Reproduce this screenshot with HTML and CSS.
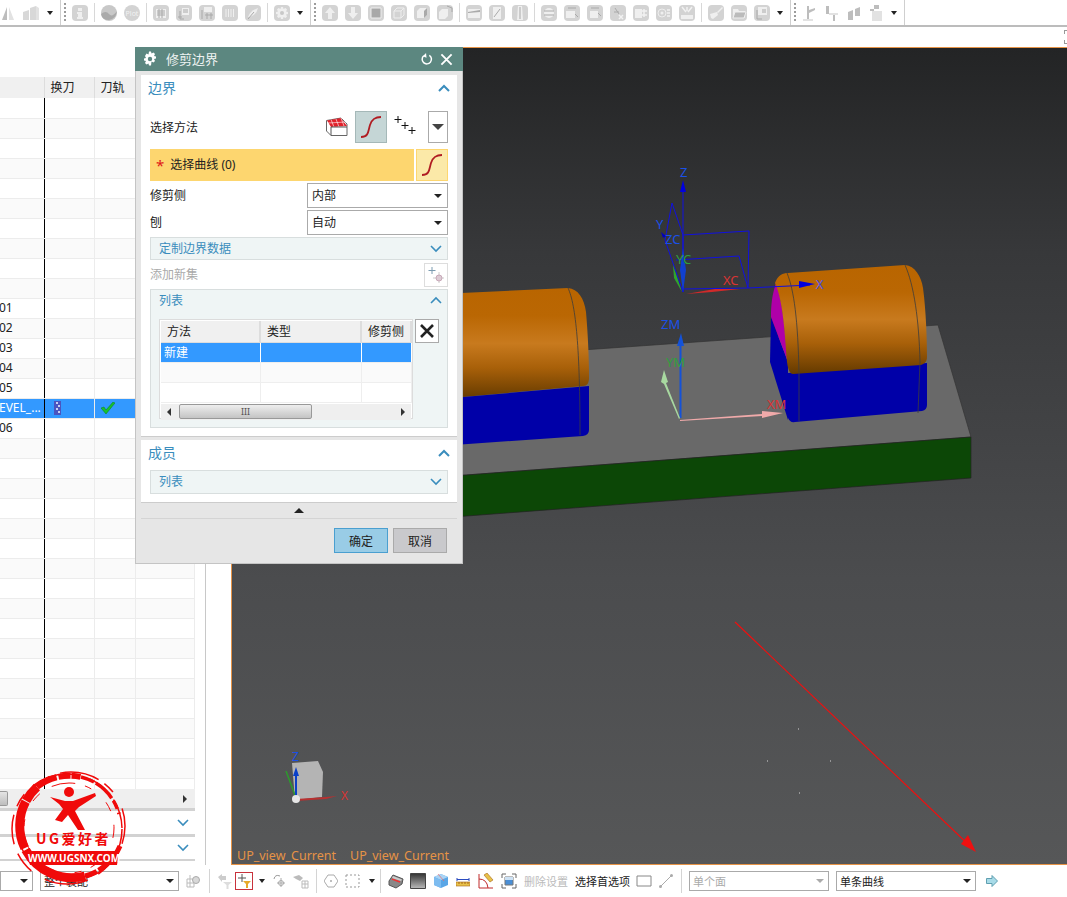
FILE: index.html
```html
<!DOCTYPE html>
<html lang="zh">
<head>
  <meta charset="UTF-8">
  <title>修剪边界</title>
  <link rel="stylesheet" href="styles.css">
</head>
<body>
  <header class="toolbar">
    <svg class="tool thin" viewBox="0 0 12 16"><path class="g2" d="M5 2V15H0Z"/><path class="g3" d="M7 2V15H12Z"/></svg>
    <svg class="tool big" viewBox="0 0 18 16"><path class="g1" d="M1 7 7 5V15H1ZM8 3 14 1V15H8Z"/><path class="g3" d="M14 1 17 3V15H14Z"/></svg>
    <span class="drop"></span>
    <span class="sep full"></span><span class="grip"></span>
    <svg class="tool tile" viewBox="0 0 16 16"><path class="w" d="M6 3h4v3H6ZM5 7h5v5h1v2H5v-2h1V9H5Z"/></svg>
    <span class="sep"></span>
    <svg class="tool" viewBox="0 0 16 16"><circle cx="8" cy="8" r="8" fill="#c8c8c8"/><path d="M0 9Q5 5 8 9T16 6Q15 14 8 15 1 15 0 9Z" fill="#aaa"/></svg>
    <svg class="tool round" viewBox="0 0 16 16"><text class="plot" x="8" y="11" text-anchor="middle">Plot</text></svg>
    <span class="sep"></span>
    <svg class="tool tile" viewBox="0 0 16 16"><path class="w" d="M3 4h10v9H3Z"/><path class="d" d="M4 6h8M4 8h8M4 10h8M6 4v9M9 4v9"/></svg>
    <svg class="tool tile" viewBox="0 0 16 16"><path class="w" d="M6 3h7v7H6Z"/><path class="d" d="M7 5h5M7 7h5M4 6v8h4M2 12h4"/></svg>
    <svg class="tool tile" viewBox="0 0 16 16"><path class="w" d="M5 2h8v5H5Z"/><path class="d" d="M3 5v9M7 9h2v2H7ZM11 9h2v2h-2ZM7 13h2M11 13h2"/></svg>
    <svg class="tool tile" viewBox="0 0 16 16"><path class="d w2" d="M4 4v8M6.500 4v8M9 4v8M11.500 4v8"/></svg>
    <svg class="tool tile" viewBox="0 0 16 16"><path class="w" d="M3 12Q5 6 13 3 12 9 5 12Z"/><path class="d" d="M3 14 9 7"/></svg>
    <span class="sep"></span>
    <svg class="tool tile" viewBox="0 0 16 16"><path class="w" d="M7 2h2l.500 2 2-1 1.500 1.500-1 2 2 .500v2l-2 .500 1 2-1.500 1.500-2-1L9 14H7l-.500-2-2 1L3 11.500l1-2-2-.500V7l2-.500-1-2L4.500 3l2 1Z"/><circle cx="8" cy="8" r="2" fill="#c8c8c8"/></svg>
    <span class="drop"></span>
    <span class="sep full"></span><span class="grip"></span>
    <svg class="tool tile" viewBox="0 0 16 16"><path class="w" d="M8 2 13 8H10V14H6V8H3Z"/></svg>
    <svg class="tool tile" viewBox="0 0 16 16"><path class="w" d="M8 14 3 8H6V2h4V8h3Z"/></svg>
    <svg class="tool tile" viewBox="0 0 16 16"><path d="M3 3h10v10H3Z" fill="#a8a8a8" stroke="#eee"/></svg>
    <svg class="tool tile" viewBox="0 0 16 16"><path class="outline" d="M3 6 6 3H13V10L10 13H3ZM3 6H10V13M10 6 13 3"/></svg>
    <svg class="tool tile" viewBox="0 0 16 16"><path class="w" d="M3 6 6 3H13V10L10 13H3Z"/><path d="M10 6 13 3V10L10 13Z" fill="#aaa"/></svg>
    <svg class="tool tile" viewBox="0 0 16 16"><path class="w" d="M2 7 5 4H11V11L8 14H2Z"/><path class="d" d="M10 1 15 3V7"/></svg>
    <span class="sep"></span>
    <svg class="tool tile" viewBox="0 0 16 16"><path class="w" d="M2 4H14V13H2Z"/><path d="M2 7 14 5V7L2 8Z" fill="#aaa"/></svg>
    <svg class="tool tile" viewBox="0 0 16 16"><path class="w" d="M4 2h8v12H4Z"/><path class="d" d="M5 12 11 4"/></svg>
    <svg class="tool tile" viewBox="0 0 16 16"><path class="w" d="M6 1h4l1 14H5Z"/><path class="d" d="M8 2v12"/></svg>
    <span class="sep"></span>
    <svg class="tool tile" viewBox="0 0 16 16"><circle class="w" cx="8" cy="8" r="5"/><path class="d" d="M3 6h10M3 10h10"/></svg>
    <svg class="tool tile" viewBox="0 0 16 16"><path class="w" d="M2 6h9v7H2Z"/><path class="d" d="M4 3h8M11 9l3 3"/></svg>
    <svg class="tool tile" viewBox="0 0 16 16"><path class="w" d="M3 6h8v7H3Z"/><path class="d" d="M4 3h8M11 8l3 3"/></svg>
    <svg class="tool tile" viewBox="0 0 16 16"><path class="d" d="M5 3l4 6M4 7h5"/><path class="x" d="M9 10l4 4M13 10l-4 4"/></svg>
    <svg class="tool tile" viewBox="0 0 16 16"><path class="w" d="M2 4h7v9H2Z"/><path class="x" d="M11 4v8M9 6h5M9 10h5"/></svg>
    <svg class="tool tile" viewBox="0 0 16 16"><circle class="outline" cx="6" cy="8" r="4"/><circle class="w" cx="6" cy="8" r="1.500"/><path class="x" d="M11 5h3M11 8h3M11 11h3"/></svg>
    <svg class="tool tile" viewBox="0 0 16 16"><path class="x" d="M3 2l4 5M13 2 9 7M8 2v4"/><path class="w" d="M2 10h12v4H2Z"/></svg>
    <span class="sep"></span>
    <svg class="tool tile" viewBox="0 0 16 16"><path class="w" d="M9 7 14 2 15 3 10 8ZM2 9 9 7 10 10 5 14 3 13Z"/></svg>
    <svg class="tool tile" viewBox="0 0 16 16"><path class="w" d="M2 4h5l1 2h6v7H2Z"/><path d="M2 13 4 7H15L13 13Z" fill="#bbb" stroke="#eee"/></svg>
    <svg class="tool tile" viewBox="0 0 16 16"><path class="w" d="M4 2h9v8H4Z"/><path class="d" d="M3 5v9h5M8 5h4M8 7h4"/></svg>
    <span class="drop"></span>
    <span class="sep full"></span><span class="grip"></span>
    <svg class="tool thin2" viewBox="0 0 14 16"><path class="g2" d="M5 1h2v13H5ZM7 5l6-2v2L7 8Z"/><path class="g3" d="M1 14H11V16H1Z"/></svg>
    <svg class="tool thin2 m1" viewBox="0 0 14 16"><path class="g2" d="M1 1h3v8H1ZM8 8h2v8H8Z"/><path class="g3" d="M4 8H13V10H4Z"/></svg>
    <svg class="tool thin2 m1" viewBox="0 0 14 16"><path class="g2" d="M1 7 6 5V15H1ZM8 4 13 2V11H8Z"/></svg>
    <svg class="tool big2" viewBox="0 0 15 16"><path class="g3" d="M3 6H13V16H3Z"/><path class="g2" d="M5 0h5v4H5ZM1 4h4v2H1Z"/></svg>
    <span class="drop"></span>
    <span class="sep full"></span>
  </header>

  <div class="strip"><span class="corner"></span></div>

  <div class="workspace">
    <aside class="nav">
      <div class="nav-wrap">
        <table class="nav-table">
          <thead><tr><th></th><th>换刀</th><th>刀轨</th><th></th></tr></thead>
          <tbody>
            <tr><td></td><td></td><td></td><td></td></tr>
            <tr><td></td><td></td><td></td><td></td></tr>
            <tr><td></td><td></td><td></td><td></td></tr>
            <tr><td></td><td></td><td></td><td></td></tr>
            <tr><td></td><td></td><td></td><td></td></tr>
            <tr><td></td><td></td><td></td><td></td></tr>
            <tr><td></td><td></td><td></td><td></td></tr>
            <tr><td></td><td></td><td></td><td></td></tr>
            <tr><td></td><td></td><td></td><td></td></tr>
            <tr><td></td><td></td><td></td><td></td></tr>
            <tr><td class="name">01</td><td></td><td></td><td></td></tr>
            <tr><td class="name">02</td><td></td><td></td><td></td></tr>
            <tr><td class="name">03</td><td></td><td></td><td></td></tr>
            <tr><td class="name">04</td><td></td><td></td><td></td></tr>
            <tr><td class="name">05</td><td></td><td></td><td></td></tr>
            <tr class="picked"><td class="name">EVEL_...</td>
              <td><svg class="cell-icon" viewBox="0 0 8 14"><path d="M0 0H7V14H0Z" fill="#4a55c0"/><path d="M2 1h2v2H2ZM4 4h2v2H4ZM2 7h2v2H2ZM4 10h2v2H4Z" fill="#c8d0f0"/></svg></td>
              <td><svg class="cell-icon check" viewBox="0 0 14 12"><path d="M0 6 3 5 5 8 12 0 14 1 5 12Z" fill="#17c22e" stroke="#0c7d1c" stroke-width=".5"/></svg></td><td></td></tr>
            <tr><td class="name">06</td><td></td><td></td><td></td></tr>
            <tr><td></td><td></td><td></td><td></td></tr>
            <tr><td></td><td></td><td></td><td></td></tr>
            <tr><td></td><td></td><td></td><td></td></tr>
            <tr><td></td><td></td><td></td><td></td></tr>
            <tr><td></td><td></td><td></td><td></td></tr>
            <tr><td></td><td></td><td></td><td></td></tr>
            <tr><td></td><td></td><td></td><td></td></tr>
            <tr><td></td><td></td><td></td><td></td></tr>
            <tr><td></td><td></td><td></td><td></td></tr>
            <tr><td></td><td></td><td></td><td></td></tr>
            <tr><td></td><td></td><td></td><td></td></tr>
            <tr><td></td><td></td><td></td><td></td></tr>
            <tr><td></td><td></td><td></td><td></td></tr>
            <tr><td></td><td></td><td></td><td></td></tr>
            <tr><td></td><td></td><td></td><td></td></tr>
            <tr><td></td><td></td><td></td><td></td></tr>
            <tr><td></td><td></td><td></td><td></td></tr>
            <tr><td></td><td></td><td></td><td></td></tr>
          </tbody>
        </table>
      </div>
      <div class="nav-scroll"><span class="nav-thumb"></span><span class="arrow-r"></span></div>
      <div class="nav-fold"><svg class="chev" viewBox="0 0 12 8"><path d="M1 1 6 6 11 1"/></svg></div>
      <div class="nav-fold"><svg class="chev" viewBox="0 0 12 8"><path d="M1 1 6 6 11 1"/></svg></div>
    </aside>

    <main class="viewport">
      <svg class="scene" viewBox="232 48 835 816">
        <defs>
          <linearGradient id="dome" x1="0" y1="0" x2="0" y2="1">
            <stop offset="0" stop-color="#b96500"/><stop offset=".25" stop-color="#ba6703"/>
            <stop offset=".5" stop-color="#c87a1e"/><stop offset=".72" stop-color="#a86009"/>
            <stop offset="1" stop-color="#643a00"/>
          </linearGradient>
        </defs>
        <path d="M440 477 971 437 938 325 440 360Z" fill="#696969" stroke="#333" stroke-width=".7"/>
        <path d="M440 477 971 437V478L440 518Z" fill="#0c4706" stroke="#222" stroke-width=".7"/>

        <path d="M440 294 568 288C578 289 584 298 586 312 588 335 589 360 589 378 589 383 587 386 583 386L440 399Z" fill="url(#dome)"/>
        <path d="M440 399 589 386V430Q589 435 583 436L440 446Z" fill="#0000a8"/>
        <path class="seam" d="M568 288C576 305 580 350 580 435"/>

        <path d="M771 317 788 362V420L770 362Z" fill="#0000a8"/>
        <path d="M776 283C772 295 771 305 771 317L788 362C785 335 783 300 776 283Z" fill="#b000a8"/>
        <path d="M788 373 927 363V405Q927 410 922 411L795 422Q790 423 788 418Z" fill="#0000a8"/>
        <path d="M775 283C778 275 783 273 788 273L905 265C915 266 921 276 923 288 926 310 927 340 927 357 927 362 924 364 921 365L793 374C790 374 788 370 787 362 785 335 783 300 775 283Z" fill="url(#dome)"/>
        <path class="seam" d="M787 273C794 290 798 320 799 374V421M905 265C914 285 919 320 920 362L918 413"/>

        <g class="wire">
          <path d="M683 292V186M672 203 683 235V292M683 235 749 231 748 288M672 203 665 240 683 292M676 260 739 256 748 288M683 289 748 288 810 285"/>
        </g>
        <path d="M683 180 686 192H680Z" fill="#0000e0"/>
        <path d="M799 281 815 284 799 288Z" fill="#0000e0"/>
        <path d="M661 232 666 236 663 238Z" fill="#0000c0"/>
        <path d="M683 248 686 270 683 292 680 270Z" fill="#1040d0"/>
        <path d="M673 265 682 292 674 278Z" fill="#2fa52f"/>
        <path d="M686 294 715 289 740 289 712 292Z" fill="#d02a2a"/>

        <path d="M681 333 684 346H681.500V418H679.500V346H677Z" fill="#1452d8"/>
        <path d="M664 370 668 382 666 383 680 418 679 419 664 384 661 382Z" fill="#a8d8a0"/>
        <path d="M680 420 762 414V411L783 413 762 418V416L680 421Z" fill="#f0aaaa"/>

        <text class="lbl blue" x="680" y="177">Z</text>
        <text class="lbl blue" x="656" y="229">Y</text>
        <text class="lbl blue" x="665" y="244">ZC</text>
        <text class="lbl green" x="676" y="264">YC</text>
        <text class="lbl red" x="723" y="285">XC</text>
        <text class="lbl xw" x="816" y="289">X</text>
        <text class="lbl blue" x="661" y="329">ZM</text>
        <text class="lbl green" x="666" y="367">YM</text>
        <text class="lbl red" x="767" y="409">XM</text>

        <path d="M735 622 971 847" stroke="#ee1010" stroke-width="1.200" fill="none"/>
        <path d="M976 852 961 844 968 835Z" fill="#ee1010"/>
        <path class="dots" d="M798 729h1M767 761h1M830 761h1M799 793h1"/>

        <path d="M292 763 318 761 323 772 322 797 295 800Z" fill="#b4b4b4"/>
        <path d="M296 798 286 771" stroke="#2d9a2d" stroke-width="1.500"/>
        <path d="M296 799 326 797 337 796 326 799 296 801Z" fill="#b83030"/>
        <path d="M296 767 299 776H297V798H295V776H293Z" fill="#0b40c8"/>
        <circle cx="296" cy="799" r="4" fill="#e6e6e6"/>
        <text class="mini blue" x="292" y="761">Z</text>
        <text class="mini red" x="341" y="800">X</text>

        <text class="view-name" x="237" y="860">UP_view_Current</text>
        <text class="view-name" x="350" y="860">UP_view_Current</text>
      </svg>
    </main>
  </div>

  <footer class="statusbar">
    <div class="select cut"><span></span><i class="tri"></i></div>
    <div class="select filter"><span>整个装配</span><i class="tri"></i></div>
    <svg class="st w14 m2" viewBox="0 0 14 16"><path d="M1 6h7v8H1ZM1 10h7M4 2v12" fill="none" stroke="#bbb"/><circle cx="10" cy="7" r="3.500" fill="#d8d8d8" stroke="#aaa"/></svg>
    <span class="st-sep"></span>
    <svg class="st w15" viewBox="0 0 15 16"><path d="M1 4 5 1V3H9V7H5V9Z" fill="#ccc"/><path d="M6 9H15L11.500 12V16H9.500V12Z" fill="#ddd"/></svg>
    <svg class="st w16 box-red tight" viewBox="0 0 16 16"><path d="M6 1V9M2 5H10" stroke="#555" fill="none"/><path d="M7 8H15L12 11V15H10V11Z" fill="#e7a92a"/></svg>
    <span class="drop st-drop"></span>
    <svg class="st w14" viewBox="0 0 14 16"><path d="M2 6Q3 1 8 3" fill="none" stroke="#999"/><path d="M9 5V14M5 10H13" stroke="#aaa" fill="none"/><circle cx="9" cy="10" r="2.500" fill="none" stroke="#aaa"/></svg>
    <svg class="st w16 m1" viewBox="0 0 16 16"><path d="M0 4 6 2 10 5 7 8 3 6Z" fill="#bbb"/><path d="M9 8h6v7H9ZM9 11h6M12 8v7" fill="none" stroke="#bbb"/></svg>
    <span class="st-sep n1"></span>
    <svg class="st w14" viewBox="0 0 14 16"><path d="M4 2H10L14 8 10 14H4L0 8Z" fill="none" stroke="#aaa"/><circle cx="7" cy="8" r="1" fill="#aaa"/></svg>
    <svg class="st w15 m2" viewBox="0 0 15 16"><path d="M1 2H14V14H1Z" fill="none" stroke="#999" stroke-dasharray="2 2"/></svg>
    <span class="drop st-drop"></span>
    <span class="st-sep n2"></span>
    <svg class="st w16" viewBox="0 0 16 16"><path d="M1 8 5 2 15 6 14 11 8 15 1 12Z" fill="#888" stroke="#555"/><path d="M4 6 12 9" stroke="#e33" stroke-width="1.500"/><path d="M5 3 14 6.500 13 8 4 5Z" fill="#ccc"/></svg>
    <svg class="st w16 n1" viewBox="0 0 16 16"><defs><linearGradient id="shade" x1="0" y1="0" x2="0" y2="1"><stop offset="0" stop-color="#333"/><stop offset="1" stop-color="#bbb"/></linearGradient></defs><path d="M.500 .500H15.500V15.500H.500Z" fill="url(#shade)" stroke="#444"/></svg>
    <svg class="st w16" viewBox="0 0 16 16"><path d="M1 4 8 1 15 4V12L8 15 1 12Z" fill="#5aa6e6"/><path d="M1 4 8 7 15 4 8 1Z" fill="#a9d4f5"/><path d="M8 7V15L1 12V4Z" fill="#7dbcf0"/><path d="M5 1 11 8" stroke="#e66" fill="none" stroke-width=".7"/></svg>
    <svg class="st w14 m1" viewBox="0 0 14 16"><path d="M1 5V8M13 5V8M1 6.500H13" stroke="#2a4bc0" fill="none"/><path d="M0 9H14V13H0Z" fill="#e8c24a" stroke="#a5651a" stroke-width=".6"/><path d="M3 9V11M6 9V11M9 9V11M12 9V11" stroke="#a5651a"/></svg>
    <svg class="st w16" viewBox="0 0 16 16"><path d="M1 1V15H15" fill="none" stroke="#c02a2a"/><path d="M1 6Q9 6 10 15" fill="none" stroke="#c02a2a"/><path d="M6 2 9 0 15 7 12 9Z" fill="#e8c24a" stroke="#a5651a" stroke-width=".6"/></svg>
    <svg class="st w16" viewBox="0 0 16 16"><path d="M1 5V1H5M11 1H15V5M15 11V15H11M5 15H1V11" fill="none" stroke="#666"/><path d="M4 4H12V12H4Z" fill="#4b8fd6" stroke="#777"/><path d="M4 4H12V7H4Z" fill="#cde2f5"/></svg>
    <span class="st-text off">删除设置</span>
    <span class="st-text">选择首选项</span>
    <svg class="st w16" viewBox="0 0 16 16"><path d="M1 3H15V13H1Z" fill="none" stroke="#888"/></svg>
    <svg class="st w14 m2" viewBox="0 0 14 16"><path d="M1 14 13 2" stroke="#aaa" fill="none"/><circle cx="1.500" cy="13.500" r="1.500" fill="#aaa"/><circle cx="12.500" cy="2.500" r="1.500" fill="#aaa"/></svg>
    <span class="st-sep n1"></span>
    <div class="select s-mask disabled"><span>单个面</span><i class="tri"></i></div>
    <div class="select s-mask"><span>单条曲线</span><i class="tri"></i></div>
    <svg class="st go" viewBox="0 0 12 12"><path d="M.500 3.500H6V.500L11.500 6 6 11.500V8.500H.500Z" fill="#a8dbe8" stroke="#5f9fb0"/></svg>
  </footer>

  <section class="dialog">
    <div class="dlg-title">
      <svg class="dlg-gear" viewBox="0 0 16 16"><path d="M7 1h2l.500 2 2-1 1.500 1.500-1 2 2 .500v2l-2 .500 1 2-1.500 1.500-2-1L9 15H7l-.500-2-2 1L3 12.500l1-2-2-.500V8l2-.500-1-2L4.500 3l2 1Z" fill="#fff" transform="translate(0 -.500)"/><circle cx="8" cy="8" r="2.200" fill="#5c8780"/></svg>
      <span class="dlg-name">修剪边界</span>
      <svg class="dlg-btn" viewBox="0 0 14 14"><path d="M4 3A5 5 0 1 0 10 2.500" fill="none" stroke="#fff" stroke-width="1.600"/><path d="M6.500 0 3 3.500 7 5Z" fill="#fff"/></svg>
      <svg class="dlg-btn close" viewBox="0 0 14 14"><path d="M1.500 1.500 12.500 12.500M12.500 1.500 1.500 12.500" stroke="#fff" stroke-width="2"/></svg>
    </div>

    <div class="group boundary">
      <div class="group-head"><span>边界</span><svg class="chev strong" viewBox="0 0 12 8"><path d="M1 7 6 2 11 7"/></svg></div>
      <div class="method">
        <span class="lab">选择方法</span>
        <svg class="m-block" viewBox="0 0 22 20"><path d="M.500 3.500 15 1 21 7V18.500H5L.500 14Z" fill="#fff" stroke="#666"/><path d="M1 3.500 15 1 21 9 5 10Z" fill="#e0202a"/><path d="M5 2.500 8 10M10 2 13 10M15 1 18 9M2 6 20 5" stroke="#fff" stroke-width=".6" fill="none"/><path d="M5 10V18.500M5 10H21" stroke="#555" fill="none"/></svg>
        <span class="m-btn on"><svg class="curve" viewBox="0 0 22 24"><path d="M1 22C9 22 8 16 10 10 12 4 15 2 21 2" fill="none" stroke="#b01c22" stroke-width="1.800"/></svg></span>
        <svg class="m-points" viewBox="0 0 22 20"><path d="M4 1V8M.500 4.500H7.500M11 7V14M7.500 10.500H14.500M18 12V19M14.500 15.500H21.500" stroke="#111" fill="none"/></svg>
        <span class="m-more"><i class="tri big-tri"></i></span>
      </div>
      <div class="stack">
        <div class="pick">
          <div class="pick-label"><b class="star">*</b><span class="pick-text">选择曲线 (0)</span></div>
          <span class="pick-btn"><svg class="curve" viewBox="0 0 22 24"><path d="M1 22C9 22 8 16 10 10 12 4 15 2 21 2" fill="none" stroke="#b01c22" stroke-width="1.800"/></svg></span>
        </div>
        <div class="field"><span class="lab">修剪侧</span><div class="select wide"><span>内部</span><i class="tri"></i></div></div>
        <div class="field"><span class="lab">刨</span><div class="select wide"><span>自动</span><i class="tri"></i></div></div>
        <div class="fold"><span>定制边界数据</span><svg class="chev" viewBox="0 0 12 8"><path d="M1 1 6 6 11 1"/></svg></div>
        <div class="field add"><span class="lab off">添加新集</span>
          <span class="add-btn"><svg viewBox="0 0 16 16"><path d="M4 0V7M.500 3.500H7.500" stroke="#7b9bb0" fill="none"/><path d="M11 5V16M5 11H16" stroke="#ccc" fill="none"/><circle cx="11" cy="11" r="3" fill="#dccbd4" stroke="#c8a8b8"/></svg></span>
        </div>
        <div class="list-panel">
          <div class="fold-head"><span>列表</span><svg class="chev" viewBox="0 0 12 8"><path d="M1 7 6 2 11 7"/></svg></div>
          <div class="list-body">
            <div class="list-box">
              <table class="mini-table">
                <thead><tr><th>方法</th><th>类型</th><th>修剪侧</th></tr></thead>
                <tbody>
                  <tr class="picked"><td>新建</td><td></td><td></td></tr>
                  <tr class="alt"><td></td><td></td><td></td></tr>
                  <tr><td></td><td></td><td></td></tr>
                </tbody>
              </table>
              <div class="hscroll"><span class="arrow-l"></span><span class="thumb"><i>III</i></span><span class="arrow-r"></span></div>
            </div>
            <span class="del"><svg viewBox="0 0 16 16"><path d="M2 2 14 14M14 2 2 14" stroke="#222" stroke-width="2.600"/></svg></span>
          </div>
        </div>
      </div>
    </div>

    <div class="group members">
      <div class="group-head"><span>成员</span><svg class="chev strong" viewBox="0 0 12 8"><path d="M1 7 6 2 11 7"/></svg></div>
      <div class="fold"><span>列表</span><svg class="chev" viewBox="0 0 12 8"><path d="M1 1 6 6 11 1"/></svg></div>
    </div>

    <div class="more-row"><i class="tri up"></i></div>
    <div class="dlg-actions">
      <button class="btn ok">确定</button>
      <button class="btn">取消</button>
    </div>
  </section>

  <svg class="watermark" viewBox="0 0 120 124">
    <g fill="none" stroke="#f00a0a">
      <path d="M74 108A52 52 0 0 1 26 19" stroke-width="9" stroke-dasharray="70 2 48 1 30"/>
      <path d="M26 19A52 52 0 0 1 70 9" stroke-width="6" stroke-dasharray="22 2 12 1 9"/>
      <path d="M70 9A52 52 0 0 1 108 46" stroke-width="3.500" stroke-dasharray="14 2 22 3 9 4 8"/>
      <path d="M109 78A52 52 0 0 1 74 108" stroke-width="5" stroke-dasharray="12 3 18 2 20"/>
      <circle cx="56" cy="61" r="55" stroke-width="1.500" stroke-dasharray="30 9 14 12 44 16 22 10"/>
      <circle cx="60" cy="58" r="54" stroke-width="1.500" stroke-dasharray="18 11 40 7 12 19"/>
      <circle cx="58" cy="60" r="45" stroke-width="1" stroke-dasharray="10 14 24 10 7 20"/>
    </g>
    <g fill="#f00a0a">
      <circle cx="58" cy="24" r="5"/>
      <path d="M39 29 54 33 62 33 84 25 85 28 68 39 64 43 74 62 67 62 57 47 51 54 44 52 52 41 48 36Z"/>
      <path d="M15 83H108L106 97H19Z"/>
    </g>
    <text class="wm-logo" x="25" y="76">UG爱好者</text>
    <text class="wm-url" x="17" y="94">WWW.UGSNX.COM</text>
  </svg>
</body>
</html>
```

FILE: styles.css
```css
* {
  box-sizing: border-box;
}

html, body {
  margin: 0;
  padding: 0;
  width: 1067px;
  height: 897px;
  overflow: hidden;
}

body {
  position: relative;
  background: #fff;
  color: #222;
  font-family: "Noto Sans", "Noto Sans CJK SC", sans-serif;
  font-size: 12px;
}

/* top toolbar */
.toolbar {
  height: 27px;
  display: flex;
  align-items: center;
  padding: 0 0 0 2px;
  border-bottom: 2px solid #bcbcbc;
}

.tool {
  flex: none;
  width: 16px;
  height: 16px;
  margin-right: 7px;
}

.tool.thin { width: 12px; margin-right: 8px; }
.tool.big { width: 18px; }
.tool.thin2 { width: 14px; margin-right: 9px; }
.tool.thin2.m1 { margin-right: 8px; }
.tool.big2 { width: 15px; }

.tile {
  background: #d3d3d3;
  border-radius: 4px;
}

.round {
  background: #d3d3d3;
  border-radius: 50%;
}

.plot {
  font-size: 7px;
  fill: #f2f2f2;
}

.g1 { fill: #d8d8d8; }
.g2 { fill: #bdbdbd; }
.g3 { fill: #e2e2e2; }
.w { fill: #efefef; stroke: none; }
.d { fill: none; stroke: #a9a9a9; }
.w2 { stroke: #efefef; }
.x { fill: none; stroke: #f2f2f2; stroke-width: 1.500; }
.outline { fill: none; stroke: #eee; }

.drop {
  flex: none;
  width: 0;
  height: 0;
  margin: 1px 8px 0 0;
  border-left: 3.500px solid transparent;
  border-right: 3.500px solid transparent;
  border-top: 4px solid #222;
}

.sep {
  flex: none;
  width: 1px;
  height: 19px;
  margin: 0 6px 0 -1px;
  background: #d8d8d8;
}

.sep.full {
  height: 25px;
  margin-right: 3px;
  background: #cfcfcf;
}

.grip {
  flex: none;
  width: 2px;
  height: 20px;
  margin-right: 6px;
  background: repeating-linear-gradient(#9c9c9c 0 2px, transparent 2px 4px);
}

.strip {
  height: 20px;
  position: relative;
}

.corner {
  position: absolute;
  right: 0;
  top: 3px;
  width: 3px;
  height: 14px;
  border-top: 1px solid #999;
  border-bottom: 1px solid #999;
  background: linear-gradient(#999 3px, transparent 3px, transparent 9px, #999 9px) left / 1px 100% no-repeat;
}

.workspace {
  display: flex;
  height: 818px;
}

/* operation navigator */
.nav {
  flex: none;
  width: 231px;
  padding: 30px 0 0;
  background: linear-gradient(90deg, transparent 205px, #c8c8c8 205px, #c8c8c8 206px, transparent 206px);
}

.nav-wrap {
  width: 195px;
  height: 712px;
  overflow: hidden;
}

.nav-table {
  width: 195px;
  table-layout: fixed;
  border-collapse: collapse;
}

.nav-table th {
  height: 21px;
  padding: 0 0 2px 6px;
  background: #f0f0f0;
  border-right: 1px solid #ddd;
  font-weight: normal;
  text-align: left;
}

.nav-table th:nth-child(1), .nav-table td:nth-child(1) { width: 44px; }
.nav-table th:nth-child(2), .nav-table td:nth-child(2) { width: 50px; }
.nav-table th:nth-child(3), .nav-table td:nth-child(3) { width: 41px; }

.nav-table td {
  height: 20px;
  padding: 0;
  border-right: 1px solid #ececec;
  border-bottom: 1px solid #ececec;
  line-height: 18px;
  overflow: hidden;
  white-space: nowrap;
}

.nav-table tbody tr:nth-child(even) { background: #fafafa; }
.nav-table td:first-child { border-right: 1px solid #000; }
.nav-table td.name { text-indent: -1px; }

.nav-table tbody tr.picked {
  background: #3399ff;
  color: #fff;
}

.cell-icon {
  display: block;
  width: 8px;
  height: 14px;
  margin-left: 9px;
}

.cell-icon.check {
  width: 14px;
  height: 12px;
  margin-left: 6px;
}

.nav-scroll {
  width: 195px;
  height: 19px;
  display: flex;
  align-items: center;
  justify-content: space-between;
  padding-right: 8px;
  background: #efefef;
}

.nav-thumb {
  width: 8px;
  height: 15px;
  background: linear-gradient(#e4e4e4, #bdbdbd);
  border: 1px solid #999;
  border-left: 0;
  border-radius: 0 2px 2px 0;
}

.nav-fold {
  width: 195px;
  height: 26px;
  display: flex;
  align-items: center;
  justify-content: flex-end;
  padding-right: 6px;
  border-top: 3px solid #d2d2d2;
}

.nav-fold:first-of-type {
  border-top-color: #bcbcbc;
}

.nav-fold + .nav-fold {
  height: 27px;
  border-bottom: 2px solid #d2d2d2;
}

.chev {
  flex: none;
  width: 12px;
  height: 8px;
}

.chev path {
  fill: none;
  stroke: #3a8dbd;
  stroke-width: 1.600;
}

.chev.strong path {
  stroke-width: 2;
}

/* graphics window */
.viewport {
  flex: 1;
  border: 1px solid #e69346;
  border-right: 0;
  background: linear-gradient(#232425 0, #37383a 25%, #4b4c4e 65%, #565758 100%);
}

.scene {
  display: block;
  width: 835px;
  height: 816px;
}

.seam {
  fill: none;
  stroke: #3c3c3c;
  stroke-width: .8;
}

.wire path {
  fill: none;
  stroke: #1010e0;
  stroke-width: 1;
}

.lbl {
  font-size: 13px;
}

.blue { fill: #1a50e8; }
.green { fill: #2f9f3f; }
.red { fill: #d83434; }
.xw { fill: #2a2ae0; stroke: #ccc; stroke-width: .2; }

.dots {
  fill: none;
  stroke: #d8d8d8;
}

.mini {
  font-size: 12px;
}

.view-name {
  fill: #e69346;
  font-size: 12.500px;
}

/* bottom status bar */
.statusbar {
  height: 32px;
  display: flex;
  align-items: center;
  gap: 7px;
  font-size: 11px;
}

.select {
  flex: none;
  height: 20px;
  display: flex;
  align-items: center;
  justify-content: space-between;
  padding: 0 4px 0 3px;
  background: #fff;
  border: 1px solid #aaa;
  color: #222;
}

.select span {
  margin-top: -1px;
}

.select.cut { width: 33px; }
.select.filter { width: 139px; }
.select.s-mask { width: 140px; }
.select.disabled { color: #aaa; }
.select.disabled .tri { border-top-color: #aaa; }

.select.wide {
  width: 141px;
  height: 25px;
  padding: 0 5px 0 4px;
  font-size: 12px;
}

.tri {
  flex: none;
  width: 0;
  height: 0;
  border-left: 4px solid transparent;
  border-right: 4px solid transparent;
  border-top: 4px solid #222;
}

.big-tri {
  border-left-width: 6px;
  border-right-width: 6px;
  border-top-width: 6px;
  border-top-color: #444;
}

.tri.up {
  border-left-width: 5px;
  border-right-width: 5px;
  border-top: 0;
  border-bottom: 5px solid #222;
}

.st {
  flex: none;
  height: 16px;
}

.w14 { width: 14px; }
.w15 { width: 15px; }
.w16 { width: 16px; }

.m1 { margin-right: 1px; }
.m2 { margin-right: 2px; }
.n1 { margin-left: -1px; }
.n2 { margin-left: -2px; }
.tight { margin-left: -3px; }

.box-red {
  outline: 1px solid #c8323c;
}

.st-drop {
  margin: 0;
}

.st-sep {
  flex: none;
  width: 1px;
  height: 24px;
  background: #d4d4d4;
}

.st-text {
  flex: none;
  width: 54px;
  white-space: nowrap;
}

.st-text.off {
  width: 44px;
  color: #bbb;
}

.go {
  width: 12px;
  height: 12px;
  margin-left: 3px;
}

/* dialog */
.dialog {
  position: absolute;
  left: 135px;
  top: 47px;
  width: 328px;
  height: 517px;
  padding: 0 5px;
  background: #e6e6e6;
  border: 1px solid #c4c4c4;
  border-top: 0;
}

.dlg-title {
  height: 24px;
  margin: 0 -6px 4px;
  padding: 0 10px 0 7px;
  display: flex;
  align-items: center;
  background: #5c8780;
  color: #fff;
}

.dlg-gear {
  width: 16px;
  height: 16px;
}

.dlg-name {
  flex: 1;
  margin: -2px 0 0 8px;
  font-size: 13px;
  opacity: .9;
}

.dlg-btn {
  width: 13px;
  height: 13px;
}

.dlg-btn.close {
  margin-left: 7px;
}

.group {
  background: #fff;
  border-bottom: 1px solid #ccc;
  padding: 0 9px;
}

.boundary {
  height: 362px;
}

.members {
  height: 63px;
  margin-top: 3px;
}

.group-head {
  height: 26px;
  margin: 0 -2px;
  display: flex;
  align-items: center;
  justify-content: space-between;
  color: #3a8dbd;
  font-size: 14px;
}

.group-head span {
  margin-top: -2px;
}

.lab {
  font-size: 12px;
}

.field .lab {
  margin-top: -2px;
}

.lab.off {
  color: #aaa;
}

.method {
  height: 32px;
  margin: 10px 0 6px;
  display: flex;
  align-items: center;
}

.method .lab {
  flex: 1;
}

.m-block {
  width: 22px;
  height: 20px;
}

.m-btn {
  width: 32px;
  height: 32px;
  margin-left: 7px;
  display: flex;
  align-items: center;
  justify-content: center;
  background: #c5d6d6;
  border: 1px solid #a5b8b8;
}

.curve {
  width: 22px;
  height: 24px;
}

.m-points {
  width: 22px;
  height: 20px;
  margin: -4px 12px 0 7px;
}

.m-more {
  width: 20px;
  height: 32px;
  display: flex;
  align-items: center;
  justify-content: center;
  border: 1px solid #aaa;
}

.stack {
  display: flex;
  flex-direction: column;
  gap: 2px;
}

.pick {
  height: 32px;
  display: flex;
  gap: 2px;
}

.pick-label {
  flex: 1;
  padding-left: 6px;
  display: flex;
  align-items: center;
  background: #fdd66f;
}

.pick-text {
  margin: -2px 0 0 6px;
}

.star {
  color: #e01818;
  font-size: 15px;
  font-weight: normal;
}

.pick-btn {
  width: 32px;
  display: flex;
  align-items: center;
  justify-content: center;
  background: #fbe9a8;
  border: 1px solid #fdd66f;
}

.field {
  height: 25px;
  display: flex;
  align-items: center;
  justify-content: space-between;
}

.fold {
  height: 23px;
  padding: 0 5px 0 8px;
  display: flex;
  align-items: center;
  justify-content: space-between;
  background: #eff5f5;
  border: 1px solid #d8dede;
  color: #3a8dbd;
}

.fold span {
  margin-top: -2px;
}

.members .fold {
  height: 24px;
  margin-top: 4px;
}

.add-btn {
  width: 24px;
  height: 24px;
  padding: 3px;
  border: 1px solid #ddd;
}

.add-btn svg {
  display: block;
}

.list-panel {
  height: 139px;
  padding: 0 8px;
  background: #eff5f5;
  border: 1px solid #d8dede;
  color: #3a8dbd;
}

.fold-head {
  height: 20px;
  display: flex;
  align-items: center;
  justify-content: space-between;
  margin-right: -3px;
}

.list-body {
  margin-top: 9px;
  display: flex;
  align-items: flex-start;
  gap: 2px;
}

.list-box {
  width: 254px;
  height: 100px;
  padding: 1px;
  background: #fff;
  border: 1px solid #dcdcdc;
  color: #222;
}

.mini-table {
  width: 251px;
  table-layout: fixed;
  border-collapse: collapse;
}

.mini-table th {
  height: 21px;
  padding: 0 0 0 6px;
  background: #f0f0f0;
  border-right: 2px solid #ddd;
  border-bottom: 1px solid #ddd;
  font-weight: normal;
  text-align: left;
}

.mini-table th:nth-child(1) { width: 99px; }
.mini-table th:nth-child(2) { width: 101px; }

.mini-table td {
  height: 20px;
  padding: 0 0 0 3px;
  border-right: 1px solid #eee;
  border-bottom: 1px solid #eee;
}

.mini-table .picked {
  background: #3399ff;
  color: #fff;
}

.mini-table .picked td {
  border-right-color: #fff;
}

.mini-table .alt {
  background: #fafafa;
}

.hscroll {
  height: 16px;
  margin-top: 1px;
  display: flex;
  align-items: center;
  justify-content: space-between;
  position: relative;
  padding: 0 6px;
  background: #efefef;
}

.thumb {
  position: absolute;
  left: 18px;
  top: 0;
  width: 133px;
  height: 15px;
  text-align: center;
  background: linear-gradient(#eee, #c4c4c4);
  border: 1px solid #999;
  border-radius: 2px;
  font-size: 9px;
  line-height: 13px;
}

.thumb i {
  font-style: normal;
  color: #555;
}

.arrow-l, .arrow-r {
  width: 0;
  height: 0;
  border-top: 4px solid transparent;
  border-bottom: 4px solid transparent;
}

.arrow-l { border-right: 4px solid #333; }
.arrow-r { border-left: 4px solid #333; }

.del {
  width: 24px;
  height: 24px;
  padding: 3px;
  background: #fff;
  border: 1px solid #aaa;
}

.del svg {
  display: block;
}

.more-row {
  height: 16px;
  display: flex;
  align-items: center;
  justify-content: center;
  border-bottom: 1px solid #d4d4d4;
}

.dlg-actions {
  margin-top: 9px;
  display: flex;
  justify-content: flex-end;
  gap: 5px;
  padding-right: 10px;
}

.btn {
  width: 54px;
  height: 25px;
  padding: 0;
  background: #c9c9cc;
  border: 1px solid #aaa;
  color: #222;
  font: inherit;
}

.btn.ok {
  background: #99cce6;
  border-color: #4a9fd0;
}

/* logo stamp */
.watermark {
  position: absolute;
  left: 11px;
  top: 768px;
  width: 120px;
  height: 124px;
}

.wm-logo {
  fill: #f00a0a;
  font-family: "Noto Sans CJK SC", sans-serif;
  font-size: 14px;
  font-weight: 700;
  letter-spacing: 2.500px;
}

.wm-url {
  fill: #fff;
  font-size: 10px;
  font-weight: 700;
}
```
